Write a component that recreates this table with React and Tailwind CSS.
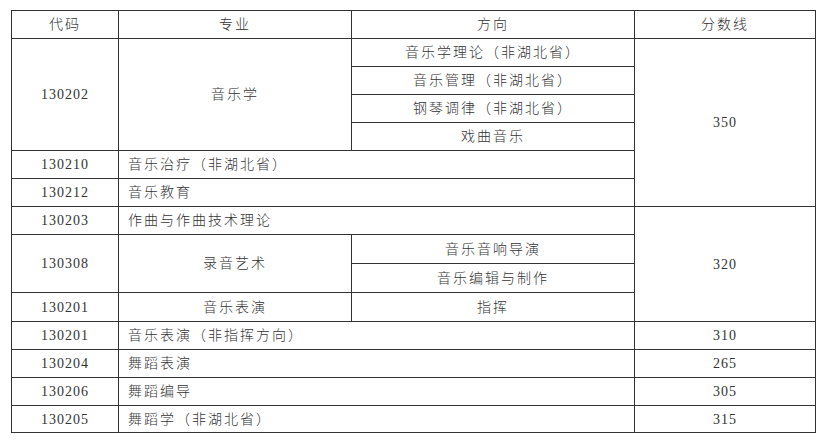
// App.jsx
const cell = "border border-[#333] align-middle p-0";
const center = cell + " text-center tracking-[2px]";
const num = cell + " text-center tracking-[1px]";
const left = cell + " text-left pl-[9px] tracking-[2px]";

function App() {
  return (
    <div className="min-h-screen bg-white pt-[10px] pl-[11px] text-[#333] text-[14px] font-['Liberation_Serif','Noto_Sans_CJK_SC',serif] font-light">
      <table className="border-collapse table-fixed w-[804px]">
        <colgroup>
          <col className="w-[107px]" />
          <col className="w-[233px]" />
          <col className="w-[283px]" />
          <col className="w-[181px]" />
        </colgroup>
        <tbody>
          <tr className="h-[28px]">
            <td className={center}>代码</td>
            <td className={center}>专业</td>
            <td className={center}>方向</td>
            <td className={center}>分数线</td>
          </tr>
          <tr className="h-[28px]">
            <td className={num} rowSpan={4}>130202</td>
            <td className={center} rowSpan={4}>音乐学</td>
            <td className={center}>音乐学理论（非湖北省）</td>
            <td className={num} rowSpan={6}>350</td>
          </tr>
          <tr className="h-[28px]">
            <td className={center}>音乐管理（非湖北省）</td>
          </tr>
          <tr className="h-[28px]">
            <td className={center}>钢琴调律（非湖北省）</td>
          </tr>
          <tr className="h-[28px]">
            <td className={center}>戏曲音乐</td>
          </tr>
          <tr className="h-[28px]">
            <td className={num}>130210</td>
            <td className={left} colSpan={2}>音乐治疗（非湖北省）</td>
          </tr>
          <tr className="h-[28px]">
            <td className={num}>130212</td>
            <td className={left} colSpan={2}>音乐教育</td>
          </tr>
          <tr className="h-[28px]">
            <td className={num}>130203</td>
            <td className={left} colSpan={2}>作曲与作曲技术理论</td>
            <td className={num} rowSpan={4}>320</td>
          </tr>
          <tr className="h-[29px]">
            <td className={num} rowSpan={2}>130308</td>
            <td className={center} rowSpan={2}>录音艺术</td>
            <td className={center}>音乐音响导演</td>
          </tr>
          <tr className="h-[29px]">
            <td className={center}>音乐编辑与制作</td>
          </tr>
          <tr className="h-[29px]">
            <td className={num}>130201</td>
            <td className={center}>音乐表演</td>
            <td className={center}>指挥</td>
          </tr>
          <tr className="h-[28px]">
            <td className={num}>130201</td>
            <td className={left} colSpan={2}>音乐表演（非指挥方向）</td>
            <td className={num}>310</td>
          </tr>
          <tr className="h-[28px]">
            <td className={num}>130204</td>
            <td className={left} colSpan={2}>舞蹈表演</td>
            <td className={num}>265</td>
          </tr>
          <tr className="h-[28px]">
            <td className={num}>130206</td>
            <td className={left} colSpan={2}>舞蹈编导</td>
            <td className={num}>305</td>
          </tr>
          <tr className="h-[27px]">
            <td className={num}>130205</td>
            <td className={left} colSpan={2}>舞蹈学（非湖北省）</td>
            <td className={num}>315</td>
          </tr>
        </tbody>
      </table>
    </div>
  );
}

export default App;
